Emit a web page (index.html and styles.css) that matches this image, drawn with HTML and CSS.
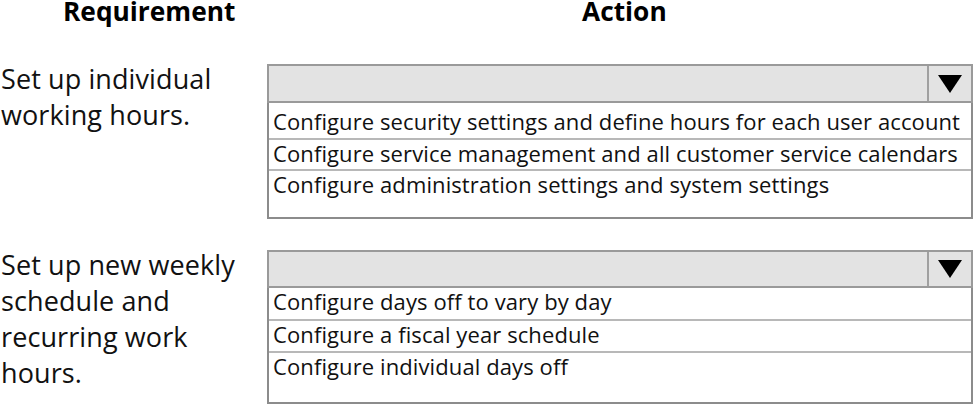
FILE: index.html
```html
<!DOCTYPE html>
<html lang="en">
<head>
<meta charset="utf-8">
<title>Requirement / Action</title>
<link rel="stylesheet" href="styles.css">
</head>
<body>
<div class="page">
  <div class="head">
    <div class="h-req">Requirement</div>
    <div class="h-act">Action</div>
  </div>

  <div class="item item-1">
    <div class="label">Set up individual<br>working hours.</div>
    <div class="dd">
      <div class="dd-head">
        <div class="dd-field"></div>
        <div class="dd-arrow"><svg width="24" height="18" viewBox="0 0 24 18"><path d="M0 0 H24 L12 18 Z" fill="#000"/></svg></div>
      </div>
      <ul class="dd-list">
        <li class="r1">Configure security settings and define hours for each user account</li>
        <li class="r2">Configure service management and all customer service calendars</li>
        <li class="r3">Configure administration settings and system settings</li>
      </ul>
    </div>
  </div>

  <div class="item item-2">
    <div class="label">Set up new weekly<br>schedule and<br>recurring work<br>hours.</div>
    <div class="dd">
      <div class="dd-head">
        <div class="dd-field"></div>
        <div class="dd-arrow"><svg width="24" height="18" viewBox="0 0 24 18"><path d="M0 0 H24 L12 18 Z" fill="#000"/></svg></div>
      </div>
      <ul class="dd-list">
        <li class="s1">Configure days off to vary by day</li>
        <li class="s2">Configure a fiscal year schedule</li>
        <li class="s3">Configure individual days off</li>
      </ul>
    </div>
  </div>
</div>
</body>
</html>
```

FILE: styles.css
```css
html, body {
  margin: 0;
  padding: 0;
  background: #fff;
}
body {
  font-family: "Open Sans", Lato, "Liberation Sans", sans-serif;
  color: #1a1a1a;
  width: 975px;
  height: 404px;
  overflow: hidden;
}
.page {
  display: flex;
  flex-direction: column;
}
.head {
  display: grid;
  grid-template-columns: 267px 706px;
  height: 64px;
}
.h-req, .h-act {
  font-weight: 700;
  font-size: 26.3px;
  line-height: 22px;
  color: #000;
}
.h-req { padding-left: 63px; }
.h-act { padding-left: 315px; }

.item {
  display: grid;
  grid-template-columns: 267px 706px;
}
.item-2 { margin-top: 31px; }

.label {
  font-size: 27px;
  letter-spacing: 0.1px;
  line-height: 36px;
  margin-top: -3px;
  padding-left: 1px;
  color: #111;
}

.dd {
  display: flex;
  flex-direction: column;
}
.dd-head {
  display: flex;
  height: 39px;
  box-sizing: border-box;
  border: 2px solid #9a9a9a;
  background: #e3e3e3;
}
.item-2 .dd-head { height: 38px; }
.dd-field { flex: 1; }
.dd-arrow {
  width: 42px;
  border-left: 2px solid #a0a0a0;
  display: flex;
  align-items: center;
  justify-content: center;
}
.dd-list {
  list-style: none;
  margin: 0;
  padding: 0;
  border: 2px solid #8c8c8c;
  border-top: none;
}
.dd-list li {
  box-sizing: border-box;
  font-size: 22px;
  letter-spacing: 0.1px;
  line-height: 26px;
  padding: 0 0 0 4px;
  border-bottom: 2px solid #b8b8b8;
  color: #111;
  white-space: nowrap;
}
.dd-list li:last-child { border-bottom: none; }
.r1 { height: 37px; padding-top: 5px !important; }
.r2 { height: 31px; }
.r3 { height: 46px; }
.s1 { height: 33px; }
.s2 { height: 32px; }
.s3 { height: 49px; }
```
